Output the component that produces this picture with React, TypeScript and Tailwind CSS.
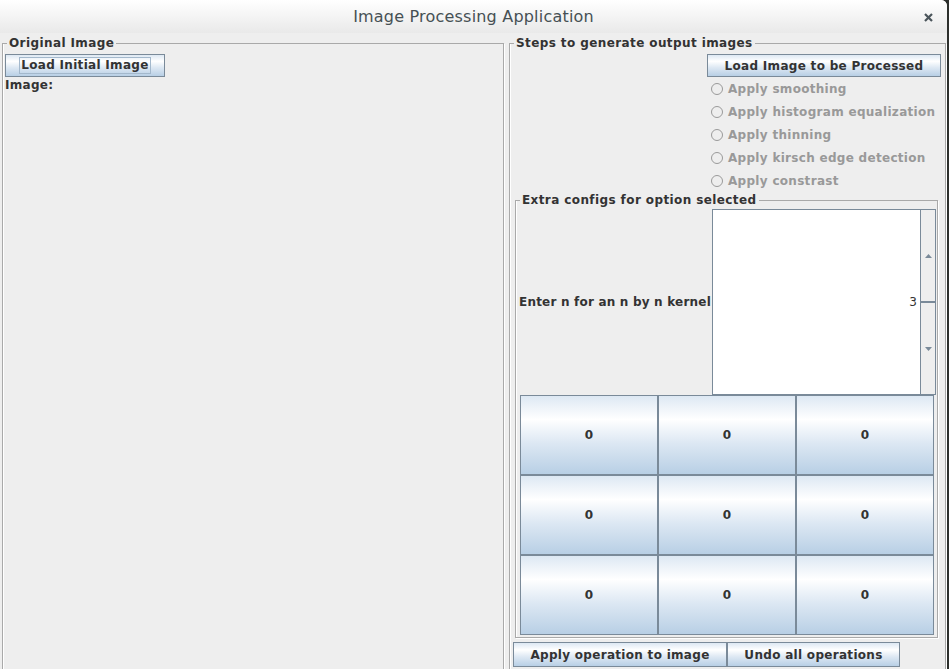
import type { ReactNode } from "react";

// Metal/Ocean look: button gradient + slate border, etched titled borders.
const OCEAN_BTN =
  "bg-[linear-gradient(to_bottom,#dde8f3_0%,#ffffff_30%,#dde8f3_60%,#b8cfe5_100%)] border border-[#7a8a99] text-[#333333] font-bold tracking-[0.3px]";

const RADIOS = [
  "Apply smoothing",
  "Apply histogram equalization",
  "Apply thinning",
  "Apply kirsch edge detection",
  "Apply constrast",
];

const KERNEL = [0, 0, 0, 0, 0, 0, 0, 0, 0];

function TitledBox({
  title,
  className,
  children,
}: {
  title: string;
  className?: string;
  children: ReactNode;
}) {
  return (
    <fieldset
      className={`m-0 min-w-0 border border-[#a9a9a9] p-0 shadow-[inset_1px_0_0_#ffffff,1px_1px_0_#ffffff] ${className ?? ""}`}
    >
      <legend className="ml-[4px] px-[2px] text-[12px] leading-[15px] font-bold tracking-[0.4px] text-[#333333]">
        {title}
      </legend>
      {children}
    </fieldset>
  );
}

function Radio({ label }: { label: string }) {
  return (
    <div className="flex h-[23px] items-center gap-[5px] pl-[4px]">
      <span className="h-[12px] w-[12px] shrink-0 rounded-full border border-[#9a9a9a] bg-[#eeeeee]" />
      <span className="text-[12px] font-bold tracking-[0.3px] whitespace-nowrap text-[#999999]">
        {label}
      </span>
    </div>
  );
}

function Arrow({ up }: { up?: boolean }) {
  return (
    <svg width="7" height="4" viewBox="0 0 7 4">
      <path d={up ? "M0 4 L3.5 0 L7 4 Z" : "M0 0 L3.5 4 L7 0 Z"} fill="#7a8a99" />
    </svg>
  );
}

function Spinner({ value }: { value: number }) {
  return (
    <div className="mr-[1px] ml-auto flex h-[186px] w-[224px]">
      <div className="flex flex-1 items-center justify-end border border-[#7a8a99] bg-white pr-[3px] text-[12px] text-[#333333]">
        {value}
      </div>
      <div className="flex w-[15px] flex-col border-y border-r border-[#7a8a99] bg-[#eeeeee]">
        <div className="flex flex-1 items-center justify-center">
          <Arrow up />
        </div>
        <div className="h-[2px] bg-[#7a8a99]" />
        <div className="flex flex-1 items-center justify-center">
          <Arrow />
        </div>
      </div>
    </div>
  );
}

export default function App() {
  return (
    <div className="flex h-[669px] w-[949px] overflow-hidden bg-[#2c2f2c] font-['DejaVu_Sans','Liberation_Sans',sans-serif] text-[#333333]">
      <div className="flex w-[947px] flex-col overflow-hidden rounded-tr-[6px] bg-[#eeeeee]">
        {/* Title bar */}
        <div className="relative flex h-[33px] shrink-0 items-center justify-center bg-[linear-gradient(to_bottom,#ffffff,#e9e9e9)]">
          <span className="text-[16px] tracking-[0.2px] text-[#465054]">Image Processing Application</span>
          <svg
            className="absolute top-[13px] right-[14px]"
            width="9"
            height="9"
            viewBox="0 0 9 9"
          >
            <path d="M1 1 L8 8 M8 1 L1 8" stroke="#4b555b" strokeWidth="2.2" />
          </svg>
        </div>

        <div className="flex gap-[5px] pt-[3px] pl-[2px]">
          {/* Left: original image */}
          <TitledBox title="Original Image" className="h-[700px] w-[502px] shrink-0">
            <div className="flex flex-col items-start">
              <button
                className={`mt-[3px] ml-[2px] flex h-[23px] w-[160px] items-center justify-center text-[12px] ${OCEAN_BTN}`}
              >
                <span className="border border-[#a3b8cc] px-[1px] leading-[15px]">
                  Load Initial Image
                </span>
              </button>
              <span className="mt-[1px] pl-[2px] text-[12px] leading-[15px] font-bold tracking-[0.3px]">
                Image:
              </span>
            </div>
          </TitledBox>

          {/* Right: processing steps */}
          <TitledBox title="Steps to generate output images" className="h-[700px] w-[437px] shrink-0">
            <div className="flex flex-col">
              <div className="flex justify-end pr-[4px]">
                <div className="flex w-[234px] flex-col">
                  <button className={`mt-[3px] h-[23px] w-full text-[12px] ${OCEAN_BTN}`}>
                    Load Image to be Processed
                  </button>
                  {RADIOS.map((r) => (
                    <Radio key={r} label={r} />
                  ))}
                </div>
              </div>

              <TitledBox title="Extra configs for option selected" className="mt-[1px] ml-[5px] w-[423px]">
                <div className="flex flex-col pb-[2px]">
                  <div className="mt-[1px] flex items-center">
                    <span className="pl-[3px] text-[12px] font-bold tracking-[0.2px] whitespace-nowrap">
                      Enter n for an n by n kernel
                    </span>
                    <Spinner value={3} />
                  </div>
                  <div className="ml-[4px] grid w-[414px] grid-cols-3">
                    {KERNEL.map((v, i) => (
                      <button
                        key={i}
                        className={`flex h-[80px] items-center justify-center text-[12px] ${OCEAN_BTN}`}
                      >
                        {v}
                      </button>
                    ))}
                  </div>
                </div>
              </TitledBox>

              <div className="mt-[4px] ml-[3px] flex">
                <button className={`h-[25px] w-[214px] text-[12px] ${OCEAN_BTN}`}>
                  Apply operation to image
                </button>
                <button className={`h-[25px] w-[173px] text-[12px] ${OCEAN_BTN}`}>
                  Undo all operations
                </button>
              </div>
            </div>
          </TitledBox>
        </div>
      </div>
    </div>
  );
}
